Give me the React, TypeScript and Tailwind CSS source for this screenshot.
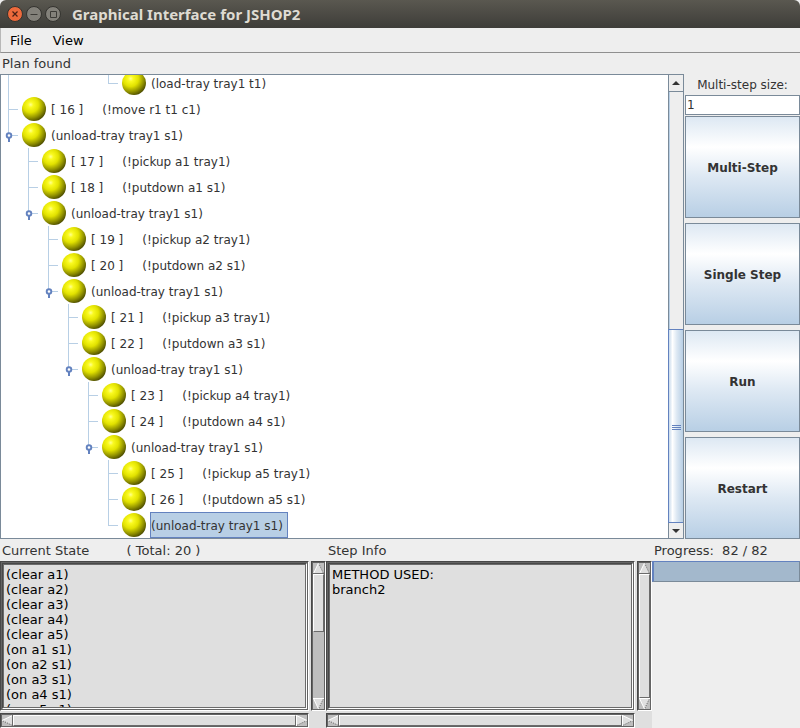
import React from "react";

type Row = { depth: number; text: string; last?: boolean; handle?: boolean; selected?: boolean; through?: number };

const ROWS: Row[] = [
  { depth: 5, text: "(load-tray tray1 t1)", last: true, through: 0 },
  { depth: 0, text: "[ 16 ]     (!move r1 t1 c1)" },
  { depth: 0, text: "(unload-tray tray1 s1)", last: true, handle: true },
  { depth: 1, text: "[ 17 ]     (!pickup a1 tray1)" },
  { depth: 1, text: "[ 18 ]     (!putdown a1 s1)" },
  { depth: 1, text: "(unload-tray tray1 s1)", last: true, handle: true },
  { depth: 2, text: "[ 19 ]     (!pickup a2 tray1)" },
  { depth: 2, text: "[ 20 ]     (!putdown a2 s1)" },
  { depth: 2, text: "(unload-tray tray1 s1)", last: true, handle: true },
  { depth: 3, text: "[ 21 ]     (!pickup a3 tray1)" },
  { depth: 3, text: "[ 22 ]     (!putdown a3 s1)" },
  { depth: 3, text: "(unload-tray tray1 s1)", last: true, handle: true },
  { depth: 4, text: "[ 23 ]     (!pickup a4 tray1)" },
  { depth: 4, text: "[ 24 ]     (!putdown a4 s1)" },
  { depth: 4, text: "(unload-tray tray1 s1)", last: true, handle: true },
  { depth: 5, text: "[ 25 ]     (!pickup a5 tray1)" },
  { depth: 5, text: "[ 26 ]     (!putdown a5 s1)" },
  { depth: 5, text: "(unload-tray tray1 s1)", last: true, selected: true },
];

const STATE = [
  "(clear a1)", "(clear a2)", "(clear a3)", "(clear a4)", "(clear a5)",
  "(on a1 s1)", "(on a2 s1)", "(on a3 s1)", "(on a4 s1)", "(on a5 s1)",
].join("\n");

function Ball() {
  return (
    <svg width="24" height="24" viewBox="0 0 24 24" className="shrink-0" aria-hidden="true">
      <circle cx="12" cy="12" r="12" fill="url(#ball)" />
    </svg>
  );
}

function TreeRow({ row }: { row: Row }) {
  return (
    <li role="treeitem" aria-selected={!!row.selected} className="flex h-[26px] shrink-0 items-center">
      {Array.from({ length: row.depth }, (_, i) => (
        <span key={i} className="flex h-full w-5 shrink-0 pl-[7px]">
          {row.through === i && <span className="h-full w-px bg-[#b8cfe5]" />}
        </span>
      ))}
      <svg width="21" height="26" viewBox="0 0 21 26" className="shrink-0" aria-hidden="true">
        <path d={row.last ? "M7.5 0V14" : "M7.5 0V26"} stroke="#b8cfe5" />
        <path d="M7 13.5H17" stroke="#b8cfe5" />
        {row.handle && (
          <>
            <circle cx="8" cy="13.5" r="2.3" fill="#fff" stroke="#6382bf" strokeWidth="1.9" />
            <path d="M8 16V20" stroke="#6382bf" strokeWidth="2" />
          </>
        )}
      </svg>
      <Ball />
      <span
        className={
          row.selected
            ? "ml-1 flex h-full items-center whitespace-pre border border-[#6382bf] bg-[#b8cfe5] pt-px pr-1"
            : "ml-1 flex h-full items-center whitespace-pre border border-transparent pt-px pr-1"
        }
      >
        {row.text}
      </span>
    </li>
  );
}

function StepButton({ children }: { children: React.ReactNode }) {
  return (
    <button
      type="button"
      className="flex-1 border border-[#7a8a99] bg-linear-[180deg,#dde8f3_0%,#ffffff_30%,#dde8f3_60%,#b8cfe5_100%] pt-[2px] text-[12px] font-bold"
    >
      {children}
    </button>
  );
}

function Arrow({ dir }: { dir: "up" | "down" | "left" | "right" }) {
  const shapes = {
    up: { body: "M5.5 0L10.5 10.5H0.5Z", light: "M5.5 0L0.5 10.5", dotted: "M5.5 0L10.5 10.5", base: "M0 10.5H11", baseColor: "#6b6b6b" },
    down: { body: "M0.5 0.5H10.5L5.5 11Z", light: "M0.5 0.5L5.5 11", dotted: "M10.5 0.5L5.5 11", base: "M0 0.5H11", baseColor: "#ffffff" },
    left: { body: "M10.5 0.5V10.5L0 5.5Z", light: "M0 5.5L10.5 0.5", dotted: "M10.5 10.5L0 5.5", base: "M10.5 0V11", baseColor: "#6b6b6b" },
    right: { body: "M0.5 0.5L11 5.5L0.5 10.5Z", light: "M0.5 0.5L11 5.5", dotted: "M11 5.5L0.5 10.5", base: "M0.5 0V11", baseColor: "#ffffff" },
  };
  const s = shapes[dir];
  return (
    <button type="button" aria-label={"Scroll " + dir} className="size-[11px] shrink-0">
      <svg width="11" height="11" viewBox="0 0 11 11" aria-hidden="true">
        <path d={s.body} fill="#dfdfdf" />
        <path d={s.dotted} stroke="#6b6b6b" strokeDasharray="1.2 1.2" />
        <path d={s.light} stroke="#fff" />
        <path d={s.base} stroke={s.baseColor} />
      </svg>
    </button>
  );
}

function Sunken({ children, vertical }: { children: React.ReactNode; vertical?: boolean }) {
  return (
    <div className="flex border border-t-[#484848] border-r-white border-b-white border-l-[#484848]">
      <div className={vertical ? "flex flex-1 flex-col border border-[#646464] bg-[#bebebe]" : "flex flex-1 border border-[#646464] bg-[#bebebe]"}>
        {children}
      </div>
    </div>
  );
}

function TextPane({ label, text, full }: { label: string; text: string; full?: boolean }) {
  const thumb = "border border-t-white border-r-[#6b6b6b] border-b-[#6b6b6b] border-l-white bg-[#dfdfdf]";
  return (
    <div className="grid flex-1 grid-cols-[1fr_15px] grid-rows-[1fr_15px] gap-[2px] bg-[#dfdfdf]">
      <Sunken>
        <div className="flex flex-1 border border-t-[#484848] border-r-white border-b-white border-l-[#484848]">
          <textarea
            readOnly
            aria-label={label}
            value={text}
            className="w-full resize-none overflow-hidden border border-[#6b6b6b] bg-[#dfdfdf] px-[2px] pt-[2px] text-[13px] leading-[15px] text-black outline-none"
          />
        </div>
      </Sunken>
      <Sunken vertical>
        <Arrow dir="up" />
        <div className={(full ? "flex-1 " : "h-[58px] ") + thumb} />
        {!full && <div className="flex-1" />}
        <Arrow dir="down" />
      </Sunken>
      <Sunken>
        <Arrow dir="left" />
        <div className={"flex-1 " + thumb} />
        <Arrow dir="right" />
      </Sunken>
    </div>
  );
}

export default function App() {
  return (
    <div className="flex h-screen flex-col overflow-hidden bg-[#eeeeee] font-['DejaVu_Sans',sans-serif] text-[13px] text-[#333333]">
      <svg width="0" height="0" className="absolute" aria-hidden="true">
        <defs>
          <radialGradient id="ball" cx="0.36" cy="0.32" r="0.72">
            <stop offset="0" stopColor="#ffff90" />
            <stop offset="0.16" stopColor="#fafa20" />
            <stop offset="0.45" stopColor="#e2e200" />
            <stop offset="0.75" stopColor="#949400" />
            <stop offset="1" stopColor="#4c4c00" />
          </radialGradient>
        </defs>
      </svg>

      <header className="flex h-7 shrink-0 items-center gap-[3px] rounded-t-md bg-linear-to-b from-[#5a5850] to-[#3e3d39] pl-[7px]">
        <button type="button" aria-label="Close" className="size-4">
          <svg width="16" height="16" viewBox="0 0 16 16">
            <circle cx="8" cy="8" r="7.5" fill="#ee6a3c" stroke="#34332f" />
            <path d="M5.5 5.5L10.5 10.5M10.5 5.5L5.5 10.5" stroke="#4a2015" strokeWidth="1.2" />
          </svg>
        </button>
        <button type="button" aria-label="Minimize" className="size-4">
          <svg width="16" height="16" viewBox="0 0 16 16">
            <circle cx="8" cy="8" r="7.5" fill="#83817a" stroke="#34332f" />
            <path d="M4.5 8.5H11.5" stroke="#3c3b37" />
          </svg>
        </button>
        <button type="button" aria-label="Maximize" className="size-4">
          <svg width="16" height="16" viewBox="0 0 16 16">
            <circle cx="8" cy="8" r="7.5" fill="#83817a" stroke="#34332f" />
            <path d="M5.5 5.5H11.5V11.5H5.5Z" fill="none" stroke="#3c3b37" />
          </svg>
        </button>
        <h1 className="ml-2 font-['Noto_Sans',sans-serif] text-[15px] font-bold text-[#dfdbd2]">
          Graphical Interface for JSHOP2
        </h1>
      </header>

      <nav className="flex h-[25px] shrink-0 items-center border-b border-l border-b-[#8f8f8f] border-l-[#b8b8b8] pt-px pl-[9px] text-black">
        <button type="button">File</button>
        <button type="button" className="ml-[21px]">View</button>
      </nav>
      <p className="flex h-[21px] shrink-0 items-center pl-[2px]">Plan found</p>

      <main className="flex min-h-0 flex-1 gap-px">
        <section className="mb-px flex flex-1 overflow-hidden border border-[#7a8a99] bg-white">
          <ul role="tree" aria-label="Plan" className="flex flex-1 flex-col justify-end text-[12px]">
            {ROWS.map((row, i) => (
              <TreeRow key={i} row={row} />
            ))}
          </ul>
          <div className="flex w-[15px] flex-col border-l border-[#7a8a99] bg-[#eeeeee]">
            <button type="button" aria-label="Scroll tree up" className="flex h-[17px] items-center justify-center border-b border-b-[#7a8a99]">
              <svg width="8" height="4" viewBox="0 0 8 4"><path d="M4 0L8 4H0Z" fill="#333" /></svg>
            </button>
            <div className="grow-[239] basis-0 border-l border-[#b8cfe5]" />
            <div className="-ml-px flex grow-[191] basis-0 flex-col items-center justify-center gap-px border-y border-l border-[#6382bf] bg-linear-[90deg,#c8daec_0%,#ffffff_25%,#dde8f3_55%,#b8cfe5_100%] pt-[2px]">
              <span className="h-px w-[9px] bg-[#6382bf]" />
              <span className="h-px w-[9px] bg-[#6382bf]" />
              <span className="h-px w-[9px] bg-[#6382bf]" />
            </div>
            <button type="button" aria-label="Scroll tree down" className="flex h-[15px] items-center justify-center">
              <svg width="8" height="4" viewBox="0 0 8 4"><path d="M0 0H8L4 4Z" fill="#333" /></svg>
            </button>
          </div>
        </section>
        <aside className="mb-px flex w-[115px] flex-col">
          <label htmlFor="size" className="flex h-[21px] items-center justify-center text-[12px]">Multi-step size:</label>
          <input id="size" defaultValue="1" className="mb-px h-5 w-full border border-[#7a8a99] bg-white px-px text-[12px] outline-none" />
          <div className="flex flex-1 flex-col gap-[5px]">
            <StepButton>Multi-Step</StepButton>
            <StepButton>Single Step</StepButton>
            <StepButton>Run</StepButton>
            <StepButton>Restart</StepButton>
          </div>
        </aside>
      </main>

      <footer className="flex h-[188px] shrink-0">
        <section className="flex flex-1 flex-col">
          <h2 className="flex h-[21px] items-center whitespace-pre pl-[2px]">{"Current State         ( Total: 20 )"}</h2>
          <TextPane label="Current State" text={STATE} />
        </section>
        <section className="flex flex-1 flex-col">
          <h2 className="flex h-[21px] items-center pl-[2px]">Step Info</h2>
          <TextPane label="Step Info" text={"METHOD USED:\nbranch2"} full />
        </section>
        <section className="flex w-[148px] flex-col">
          <h2 className="flex h-[21px] items-center whitespace-pre pl-[2px]">Progress:  82 / 82</h2>
          <div role="progressbar" aria-label="Progress" aria-valuemin={0} aria-valuemax={82} aria-valuenow={82} className="h-[21px] border border-l-2 border-t-[#6382bf] border-r-[#7a8a99] border-b-[#7a8a99] border-l-[#6382bf] bg-[#a3b8cc]" />
        </section>
      </footer>
    </div>
  );
}
